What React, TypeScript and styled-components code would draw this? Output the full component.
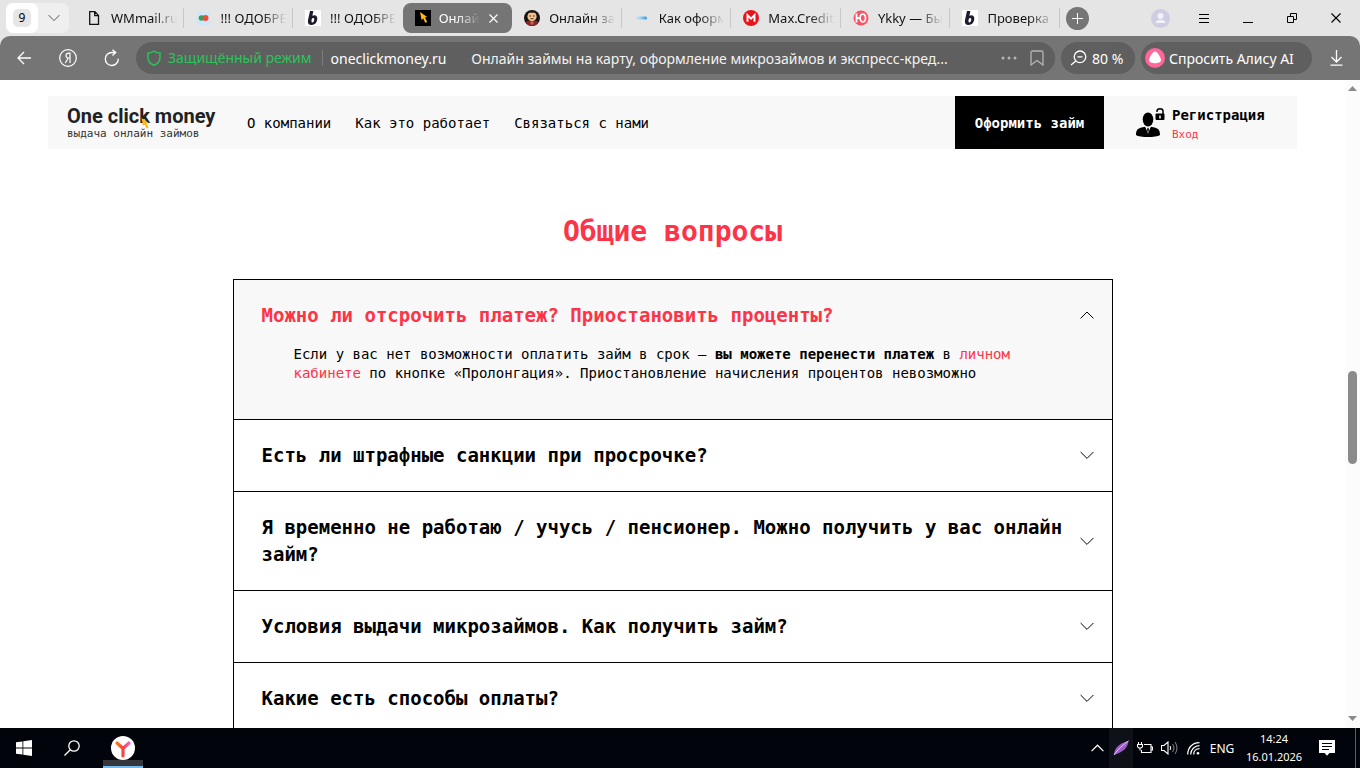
import React, { useState } from "react";
import styled, { createGlobalStyle, css } from "styled-components";

const mono = `"DejaVu Sans Mono", "Liberation Mono", monospace`;
const ui = `"Noto Sans", "Open Sans", sans-serif`;
const red = "#ff3347";

const GlobalStyle = createGlobalStyle`
  * { box-sizing: border-box; }
  body { margin: 0; background: #fff; font-family: ${ui}; }
  button { border: 0; padding: 0; background: none; color: inherit; font: inherit; cursor: pointer; }
  svg { display: block; flex: none; }
  a { color: inherit; text-decoration: none; }
`;

const Screen = styled.div`
  display: flex;
  flex-direction: column;
  height: 100vh;
  overflow: hidden;
`;

/* Browser chrome */

const Chrome = styled.header`
  flex: none;
  background: #e5e5e5;
`;

const TabStrip = styled.div`
  display: flex;
  align-items: center;
  height: 36px;
  padding: 0 2px 0 6px;
`;

const TabCounter = styled.div`
  display: flex;
  flex: none;
  width: 63px;
  height: 30px;
  margin-right: 5px;
  border-radius: 7px;
  background: #efefef;
`;

const CountButton = styled.button`
  display: grid;
  place-items: center;
  width: 32px;
  border-radius: 7px;
  background: #fff;
`;

const Count = styled.span`
  width: 18px;
  border-radius: 5px;
  background: #e6e6e6;
  color: #000;
  font-size: 12px;
  line-height: 18px;
  text-align: center;
`;

const ListButton = styled.button`
  display: grid;
  flex: 1;
  place-items: center;
  color: #888;
`;

const TabList = styled.div`
  display: grid;
  flex: 0 1 986px;
  grid-auto-columns: minmax(0, 1fr);
  grid-auto-flow: column;
  min-width: 0;
`;

const Tab = styled.button<{ $active?: boolean; $divider?: boolean }>`
  display: flex;
  align-items: center;
  gap: 9px;
  min-width: 0;
  height: 30px;
  padding: 0 7px 0 12px;
  color: #111;
  font-size: 13px;
  ${(p) =>
    p.$divider &&
    css`
      background: linear-gradient(#c8c8c8, #c8c8c8) right center / 1px 20px no-repeat;
    `}
  ${(p) =>
    p.$active &&
    css`
      gap: 8px;
      padding-right: 14px;
      border-radius: 8px;
      background: #757575;
      color: #fff;
    `}
`;

const TabTitle = styled.span`
  flex: 1;
  min-width: 0;
  overflow: hidden;
  white-space: nowrap;
  text-align: left;
  mask-image: linear-gradient(to left, transparent, #000 24px);
`;

const NewTab = styled.button`
  display: grid;
  flex: none;
  place-items: center;
  width: 23px;
  height: 23px;
  margin-left: 6px;
  border-radius: 50%;
  background: #757575;
  color: #fff;
`;

const WindowControls = styled.div`
  display: flex;
  margin-left: auto;
`;

const IconButton = styled.button`
  display: grid;
  flex: none;
  place-items: center;
  width: 44px;
  height: 32px;
`;

const Toolbar = styled.div`
  display: flex;
  align-items: center;
  height: 44px;
  padding: 0 2px;
  border-radius: 10px 10px 0 0;
  background: #757575;
  color: #fff;
  font-size: 14px;
`;

const AddressBar = styled.div`
  display: flex;
  flex: 1;
  align-items: center;
  min-width: 0;
  height: 32px;
  margin: 0 6px 0 2px;
  padding: 0 4px 0 10px;
  border-radius: 16px;
  background: #5f5f5f;
`;

const SafeMode = styled.button`
  display: flex;
  align-items: center;
  gap: 6px;
  padding-right: 10px;
  border-right: 1px solid #7b7b7b;
  color: #2bc35a;
  line-height: 16px;
  white-space: nowrap;
`;

const Domain = styled.a`
  margin: 0 25px 0 8px;
`;

const AddressInput = styled.input`
  flex: 1;
  min-width: 0;
  padding: 0;
  border: 0;
  outline: 0;
  background: none;
  color: #f2f2f2;
  font: 14px ${ui};
`;

const AddressAction = styled.button`
  display: grid;
  place-items: center;
  width: 28px;
  height: 28px;
  color: #b5b5b5;
`;

const Pill = styled.button`
  display: flex;
  flex: none;
  align-items: center;
  gap: 5px;
  width: 74px;
  height: 32px;
  margin-right: 6px;
  padding-left: 9px;
  border-radius: 16px;
  background: #5f5f5f;
  white-space: nowrap;
`;

const AlicePill = styled(Pill)`
  gap: 4px;
  width: 171px;
  margin-right: 2px;
  padding-left: 4px;
`;

/* Page */

const Viewport = styled.div`
  display: flex;
  flex: 1;
  min-height: 0;
  background: #fff;
`;

const Page = styled.div`
  flex: 1;
  min-width: 0;
  overflow: hidden;
  padding: 16px 48px 0;
  color: #000;
  font-family: ${mono};
  font-size: 14px;
`;

const SiteHeader = styled.header`
  display: flex;
  align-items: stretch;
  height: 53px;
  background: #f8f8f8;
`;

const Logo = styled.a`
  position: relative;
  width: 180px;
  padding: 9px 0 0 19px;
`;

const LogoName = styled.span`
  display: block;
  color: #222;
  font: 700 20px/22px Roboto, sans-serif;
  white-space: nowrap;
`;

const LogoNote = styled.span`
  display: block;
  color: #333;
  font-size: 11px;
  line-height: 13px;
  white-space: nowrap;
`;

const LogoPointer = styled.svg`
  position: absolute;
  top: 22px;
  left: 93px;
`;

const SiteNav = styled.nav`
  display: flex;
  flex: 1;
  align-items: center;
  gap: 24px;
  padding-left: 19px;
  white-space: nowrap;
`;

const ApplyButton = styled.button`
  width: 149px;
  background: #000;
  color: #fff;
  font-weight: 700;
`;

const Account = styled.div`
  display: flex;
  align-items: center;
  gap: 7px;
  width: 193px;
  padding-left: 32px;
`;

const AccountLinks = styled.div`
  display: flex;
  flex-direction: column;
  gap: 4px;
  padding-top: 4px;
  line-height: 16px;
`;

const RegisterLink = styled.a`
  font-weight: 700;
`;

const LoginLink = styled.a`
  color: ${red};
  font-size: 11px;
`;

const Title = styled.h1`
  margin: 65px 0 29px;
  color: ${red};
  font-size: 28px;
  line-height: 36px;
  text-align: center;
`;

const Accordion = styled.section`
  max-width: 880px;
  margin: 0 auto;
  border: 1px solid #000;
`;

const Item = styled.article<{ $open: boolean }>`
  padding: 22px 0;
  border-bottom: 1px solid #000;
  background: ${(p) => (p.$open ? "#f8f8f8" : "#fff")};
`;

const Question = styled.h2<{ $open: boolean }>`
  margin: 0;
  color: ${(p) => (p.$open ? red : "#000")};
  font-size: 19px;
  line-height: 27px;
`;

const QuestionButton = styled.button`
  display: flex;
  align-items: center;
  justify-content: space-between;
  gap: 16px;
  width: 100%;
  padding: 0 18px 0 28px;
  text-align: left;
`;

const Answer = styled.p`
  margin: 0;
  padding: 16px 80px 14px 60px;
  line-height: 19px;
`;

const AnswerLink = styled.a`
  color: ${red};
`;

const ScrollTrack = styled.div`
  display: flex;
  flex: none;
  flex-direction: column;
  align-items: center;
  width: 15px;
  padding: 6px 0 7px;
  background: #fcfcfc;
`;

const ScrollSpace = styled.div<{ $grow: number }>`
  flex: ${(p) => p.$grow} 1 0;
`;

const ScrollThumb = styled.div`
  width: 9px;
  height: 93px;
  border-radius: 5px;
  background: #8b8b8b;
`;

/* Taskbar */

const Taskbar = styled.footer`
  display: flex;
  flex: none;
  align-items: stretch;
  height: 40px;
  background: #01040a;
  color: #fff;
  font-size: 12px;
`;

const TaskButton = styled.button`
  display: grid;
  place-items: center;
  width: 48px;
`;

const RunningApp = styled.button`
  display: grid;
  place-items: center;
  width: 40px;
  margin-left: 7px;
  border-bottom: 2px solid #76b9ed;
  background: linear-gradient(#35373b, #35373b) bottom / 100% 6px no-repeat;
`;

const Tray = styled.div`
  display: flex;
  align-items: stretch;
  margin-left: auto;
`;

const TrayButton = styled.button<{ $lit?: boolean }>`
  display: grid;
  place-items: center;
  width: 24px;
  background: ${(p) => (p.$lit ? "#0e1218" : "transparent")};
`;

const Language = styled.button`
  width: 34px;
`;

const Clock = styled.time`
  width: 70px;
  padding-top: 2px;
  font-size: 11px;
  line-height: 18px;
  text-align: center;
  white-space: nowrap;
`;

const Notifications = styled.button`
  display: grid;
  place-items: center;
  width: 47px;
  margin-right: 4px;
  padding-right: 10px;
  border-right: 1px solid #5b5d62;
`;

/* Icons */

const line = { fill: "none", stroke: "currentColor", strokeWidth: 1.3 } as const;

const Chevron = ({ up, size = 14 }: { up?: boolean; size?: number }) => (
  <svg width={size} height="8" viewBox="0 0 14 8" {...line}>
    <path d={up ? "M.6 7.4 7 1l6.4 6.4" : "M.6.6 7 7l6.4-6.4"} />
  </svg>
);

const FileIcon = () => (
  <svg width="16" height="16" viewBox="0 0 16 16" {...line}>
    <path d="M3.7 1.7h5.2l3.6 3.7v9H3.7zM8.7 1.7v4h3.8" />
  </svg>
);

const DotsFavicon = () => (
  <svg width="16" height="16" viewBox="0 0 16 16">
    <rect x="1" y="2" width="13" height="13" rx="2" fill="#cfe6fb" />
    <circle cx="5.5" cy="8" r="2.8" fill="#26a65b" />
    <circle cx="9.5" cy="8" r="3" fill="#f04a3a" />
  </svg>
);

const BFavicon = () => (
  <svg width="16" height="16" viewBox="0 0 16 16">
    <rect width="16" height="16" fill="#fff" />
    <path
      d="M5 1h3.300L7.400 5.800c2.700-1.500 5.200.1 4.900 3.300-.4 3.900-2.800 6-5.700 5.900-3-.1-4.200-1.800-3.600-5zM6.700 9.200c-.4 2-.3 3.300.7 3.300 1.100 0 1.700-1.400 1.800-3 .1-2.200-2-1.900-2.500-.3z"
      fill="#1c1c2e"
      fillRule="evenodd"
    />
  </svg>
);

const Pointer = () => (
  <path d="M0 0 9 6.200 6.200 6.800 9 12.600 6.400 13.500 4.300 8.200 2 10z" fill="#fdb913" />
);

const PointerFavicon = () => (
  <svg width="16" height="16" viewBox="0 0 16 16">
    <rect width="16" height="16" fill="#000" />
    <g transform="translate(5 2) scale(.8)">
      <Pointer />
    </g>
  </svg>
);

const MonkFavicon = () => (
  <svg width="16" height="16" viewBox="0 0 16 16">
    <circle cx="8" cy="8" r="8" fill="#171313" />
    <path d="M1.500 12.500c1-3 12-3 13 0-2.500 4.600-10.500 4.600-13 0z" fill="#8e1f2d" />
    <ellipse cx="8" cy="6.500" rx="4.600" ry="4.700" fill="#f3c58c" />
    <path d="M4.500 2.800Q8-1 11.500 2.800z" fill="#241313" />
    <path d="M5.300 6h1.800M9 6h1.800M6.500 8.700h3" stroke="#50291c" />
    <path d="M6.500 11.500h3v3h-3z" fill="#b5713f" />
  </svg>
);

const BlueFavicon = () => (
  <svg width="16" height="16" viewBox="0 0 16 16">
    <defs>
      <linearGradient id="dash">
        <stop stopColor="#bfe4f8" stopOpacity=".3" />
        <stop offset="1" stopColor="#1a94ec" />
      </linearGradient>
    </defs>
    <rect x="1" y="6.500" width="12" height="3" rx="1.500" fill="url(#dash)" />
  </svg>
);

const MFavicon = () => (
  <svg width="16" height="16" viewBox="0 0 16 16">
    <circle cx="8" cy="8" r="8" fill="#e8141c" />
    <path d="M4.500 11.700V5L8 8.600 11.500 5v6.700" fill="none" stroke="#fff" strokeWidth="1.900" />
  </svg>
);

const YuFavicon = () => (
  <svg width="16" height="16" viewBox="0 0 16 16">
    <circle cx="8" cy="8" r="7.500" fill="#fb5263" />
    <path d="M3.500 3.500v9M3.500 8h4" stroke="#fff" strokeWidth="1.800" />
    <ellipse cx="9.800" cy="8" rx="2.700" ry="3.900" fill="none" stroke="#fff" strokeWidth="1.700" />
  </svg>
);

const tabs: { title: string; icon: React.ReactNode; active?: boolean; divider?: boolean }[] = [
  { title: "WMmail.ru", icon: <FileIcon />, divider: true },
  { title: "!!! ОДОБРЕ", icon: <DotsFavicon />, divider: true },
  { title: "!!! ОДОБРЕ", icon: <BFavicon /> },
  { title: "Онлайн", icon: <PointerFavicon />, active: true },
  { title: "Онлайн зай", icon: <MonkFavicon />, divider: true },
  { title: "Как оформ", icon: <BlueFavicon />, divider: true },
  { title: "Max.Credit", icon: <MFavicon />, divider: true },
  { title: "Ykky — Быс", icon: <YuFavicon />, divider: true },
  { title: "Проверка л", icon: <BFavicon />, divider: true },
];

const questions: { title: string; answer?: React.ReactNode }[] = [
  {
    title: "Можно ли отсрочить платеж? Приостановить проценты?",
    answer: (
      <>
        Если у вас нет возможности оплатить займ в срок — <b>вы можете перенести платеж</b> в{" "}
        <AnswerLink href="#account">личном кабинете</AnswerLink> по кнопке «Пролонгация».
        Приостановление начисления процентов невозможно
      </>
    ),
  },
  { title: "Есть ли штрафные санкции при просрочке?" },
  { title: "Я временно не работаю / учусь / пенсионер. Можно получить у вас онлайн займ?" },
  { title: "Условия выдачи микрозаймов. Как получить займ?" },
  { title: "Какие есть способы оплаты?" },
];

const BrowserChrome = () => (
  <Chrome>
    <TabStrip>
      <TabCounter>
        <CountButton aria-label="Открытые вкладки"><Count>9</Count></CountButton>
        <ListButton aria-label="Список вкладок"><Chevron size={12} /></ListButton>
      </TabCounter>
      <TabList role="tablist">
        {tabs.map((t, i) => (
          <Tab key={i} role="tab" aria-selected={!!t.active} $active={t.active} $divider={t.divider}>
            {t.icon}
            <TabTitle>{t.title}</TabTitle>
            {t.active && (
              <svg width="9" height="9" viewBox="0 0 9 9" {...line} strokeWidth={1.1}><path d="m.5.500 8 8m0-8-8 8" /></svg>
            )}
          </Tab>
        ))}
      </TabList>
      <NewTab aria-label="Новая вкладка">
        <svg width="11" height="11" viewBox="0 0 11 11" {...line} strokeWidth={1}><path d="M5.500 0v11M0 5.500h11" /></svg>
      </NewTab>
      <WindowControls>
        <IconButton aria-label="Профиль">
          <svg width="19" height="19" viewBox="0 0 19 19">
            <circle cx="9.500" cy="9.500" r="9.500" fill="#cfcde2" />
            <circle cx="9.500" cy="7" r="3" fill="#f2f1fa" />
            <path d="M4.500 14c0-4.500 10-4.500 10 0z" fill="#f2f1fa" />
          </svg>
        </IconButton>
        <IconButton aria-label="Меню">
          <svg width="10" height="9" viewBox="0 0 10 9" {...line} strokeWidth={1}><path d="M0 .5h10M0 4.500h10M0 8.500h10" /></svg>
        </IconButton>
        <IconButton aria-label="Свернуть">
          <svg width="10" height="10" viewBox="0 0 10 10" {...line} strokeWidth={1}><path d="M0 9.500h10" /></svg>
        </IconButton>
        <IconButton aria-label="Свернуть в окно">
          <svg width="10" height="10" viewBox="0 0 10 10" {...line} strokeWidth={1}><path d="M.5 3.500h6v6h-6zM3.500 3.500v-3h6v6h-3" /></svg>
        </IconButton>
        <IconButton aria-label="Закрыть">
          <svg width="10" height="10" viewBox="0 0 10 10" {...line} strokeWidth={1.1}><path d="m.5.500 9 9m0-9-9 9" /></svg>
        </IconButton>
      </WindowControls>
    </TabStrip>
    <Toolbar>
      <IconButton aria-label="Назад">
        <svg width="14" height="14" viewBox="0 0 14 14" {...line}><path d="M14 7H1M7 1 1 7l6 6" /></svg>
      </IconButton>
      <IconButton aria-label="Яндекс">
        <svg width="18" height="18" viewBox="0 0 18 18" {...line} strokeWidth={1.2}>
          <circle cx="9" cy="9" r="8.300" />
          <path d="M11 14V4.200H9.500C6.500 4.200 6 8.800 9.200 9H11M9.200 9 6.300 14" />
        </svg>
      </IconButton>
      <IconButton aria-label="Обновить">
        <svg width="16" height="18" viewBox="0 0 16 18" {...line}><path d="M14.300 9.800A6.500 6.500 0 1 1 8 3.500h3.500M8.500.7l3.200 2.800-3.200 3" /></svg>
      </IconButton>
      <AddressBar>
        <SafeMode>
          <svg width="16" height="16" viewBox="0 0 16 16" {...line} strokeWidth={1.5}><path d="M8 1c2 1.600 4 2 6 2v4.500C14 11.500 11.500 14 8 15.200 4.500 14 2 11.500 2 7.500V3c2 0 4-.4 6-2z" /></svg>
          Защищённый режим
        </SafeMode>
        <Domain href="#site">oneclickmoney.ru</Domain>
        <AddressInput aria-label="Адрес" defaultValue="Онлайн займы на карту, оформление микрозаймов и экспресс-кред..." />
        <AddressAction aria-label="Ещё">
          <svg width="16" height="4" viewBox="0 0 16 4" fill="currentColor"><circle cx="2" cy="2" r="1.500" /><circle cx="8" cy="2" r="1.500" /><circle cx="14" cy="2" r="1.500" /></svg>
        </AddressAction>
        <AddressAction aria-label="В закладки">
          <svg width="14" height="16" viewBox="0 0 14 16" {...line}><path d="M1 2.500Q1 1 2.500 1h9Q13 1 13 2.500V15l-6-4.500L1 15z" /></svg>
        </AddressAction>
      </AddressBar>
      <Pill>
        <svg width="17" height="16" viewBox="0 0 17 16" {...line}><circle cx="10" cy="6.800" r="5.800" /><path d="M5.800 11 1 15M7.500 6.800h5" /></svg>
        80 %
      </Pill>
      <AlicePill>
        <svg width="20" height="20" viewBox="0 0 20 20"><circle cx="10" cy="10" r="10" fill="#ff6699" /><path d="M10 3.500c2.500 0 6 6.500 6 8.800 0 4-12 4-12 0C4 10 7.500 3.500 10 3.500z" fill="#fff" /></svg>
        Спросить Алису AI
      </AlicePill>
      <IconButton aria-label="Загрузки">
        <svg width="13" height="16" viewBox="0 0 13 16" {...line}><path d="M6.500 0v12M1.500 7l5 5 5-5M.5 15.200h12" /></svg>
      </IconButton>
    </Toolbar>
  </Chrome>
);

const PageHeader = () => (
  <SiteHeader>
    <Logo href="#home">
      <LogoName>One click money</LogoName>
      <LogoNote>выдача онлайн займов</LogoNote>
      <LogoPointer width="8" height="11" viewBox="0 0 9 14"><Pointer /></LogoPointer>
    </Logo>
    <SiteNav>
      <a href="#about">О компании</a>
      <a href="#how">Как это работает</a>
      <a href="#contacts">Связаться с нами</a>
    </SiteNav>
    <ApplyButton>Оформить займ</ApplyButton>
    <Account>
      <svg width="29" height="30" viewBox="0 0 29 30">
        <ellipse cx="12" cy="11.500" rx="5.300" ry="7" />
        <path d="M0 27c0-4.500 1.500-6.200 4.500-7.200l4.500-1 3 5 3-5 4.500 1c3 1 4.500 2.700 4.500 7.200-4 2.800-20 2.800-24 0z" />
        <path d="M9.800 19.500 12 26l2.200-6.500z" fill="#f8f8f8" />
        <path d="m12 19.500-1 1.500 1 5 1-5z" />
        <rect x="19.500" y="5.500" width="9" height="6.500" rx="1" />
        <path d="M21 4V3c0-3 6-3 6 0v3" fill="none" stroke="#000" strokeWidth="1.500" />
        <path d="M24 7.500v3" stroke="#fff" strokeWidth="1.500" />
      </svg>
      <AccountLinks>
        <RegisterLink href="#register">Регистрация</RegisterLink>
        <LoginLink href="#login">Вход</LoginLink>
      </AccountLinks>
    </Account>
  </SiteHeader>
);

const SystemBar = () => (
  <Taskbar>
    <TaskButton aria-label="Пуск">
      <svg width="16" height="16" viewBox="0 0 16 16" fill="#fff"><path d="M0 2.300 6.500 1.400v6.200H0zM7.300 1.300 16 0v7.600H7.300zM0 8.400h6.500v6.200L0 13.700zM7.300 8.400H16V16l-8.700-1.300z" /></svg>
    </TaskButton>
    <TaskButton aria-label="Поиск">
      <svg width="16" height="16" viewBox="0 0 16 16" {...line}><circle cx="10" cy="6" r="5.200" /><path d="M6.300 9.700.5 15.500" /></svg>
    </TaskButton>
    <RunningApp aria-label="Яндекс Браузер">
      <svg width="24" height="26" viewBox="0 -2 24 26">
        <defs>
          <linearGradient id="ya" gradientUnits="userSpaceOnUse" x1="5" y1="0" x2="19" y2="0">
            <stop stopColor="#ff7a1a" />
            <stop offset=".5" stopColor="#f9423a" />
            <stop offset="1" stopColor="#ff5ad0" />
          </linearGradient>
        </defs>
        <circle cx="12" cy="12" r="12" fill="#fff" />
        <path d="M6 7 12 12.500 18 7M12 12.500v7.500" fill="none" stroke="url(#ya)" strokeWidth="3.200" strokeLinecap="round" />
      </svg>
    </RunningApp>
    <Tray>
      <TrayButton aria-label="Скрытые значки"><Chevron up size={13} /></TrayButton>
      <TrayButton aria-label="Перо" $lit>
        <svg width="16" height="16" viewBox="0 0 16 16"><path d="M1 15C1 7 8 3 15.500.8 15 8 10 12 1 15z" fill="#9b5fc4" /><path d="M1 15C5 9 9 6 15.500.8" stroke="#e0c5ef" fill="none" /></svg>
      </TrayButton>
      <TrayButton aria-label="Питание">
        <svg width="16" height="12" viewBox="0 0 16 12" {...line} strokeWidth={1.1}><path d="M7 2.500h7v8H4.500V8M14 5h1.500v3H14M1.500 0v2.500M4.500 0v2.500M.5 2.500h5v2.200L4 6H2L.5 4.700zM3 6v2.500" /></svg>
      </TrayButton>
      <TrayButton aria-label="Звук">
        <svg width="17" height="14" viewBox="0 0 17 14" {...line} strokeWidth={1.1}><path d="M.5 4.500H3L7 1v12L3 9.500H.5z" /><path d="M9 5q1.500 2 0 4" /><path d="M11.500 3q3 4 0 8M14 1q4 6 0 12" stroke="#777" /></svg>
      </TrayButton>
      <TrayButton aria-label="Сеть">
        <svg width="13" height="13" viewBox="0 0 13 13" {...line} strokeWidth={1.2}><path d="M.7 12.500C.7 5.500 5.500.7 12.500.7M3.700 12.500c0-5 4-8.800 8.800-8.800M6.700 12.500c0-3.500 2.500-5.800 5.800-5.800" /><circle cx="11" cy="11.200" r="1.300" fill="#fff" stroke="none" /></svg>
      </TrayButton>
      <Language>ENG</Language>
      <Clock>14:24<br />16.01.2026</Clock>
      <Notifications aria-label="Уведомления">
        <svg width="16" height="16" viewBox="0 0 16 16"><path d="M0 0h16v13h-5.500L8 15.800 5.500 13H0z" fill="#fff" /><path d="M3 3.500h10M3 6.500h10M3 9.500h7" stroke="#01040a" /></svg>
      </Notifications>
    </Tray>
  </Taskbar>
);

export default function App() {
  const [open, setOpen] = useState(0);
  return (
    <Screen>
      <GlobalStyle />
      <BrowserChrome />
      <Viewport>
        <Page>
          <PageHeader />
          <main>
            <Title>Общие вопросы</Title>
            <Accordion>
              {questions.map((q, i) => (
                <Item key={q.title} $open={open === i}>
                  <Question $open={open === i}>
                    <QuestionButton aria-expanded={open === i} onClick={() => setOpen(open === i ? -1 : i)}>
                      {q.title}
                      <svg width="14" height="9" viewBox="0 0 14 9" fill="none" stroke="#000">
                        <path d={open === i ? "M.6 7.400 7 1l6.400 6.400" : "M.6 1 7 7.400l6.400-6.400"} />
                      </svg>
                    </QuestionButton>
                  </Question>
                  {open === i && q.answer && <Answer>{q.answer}</Answer>}
                </Item>
              ))}
            </Accordion>
          </main>
        </Page>
        <ScrollTrack aria-hidden="true">
          <svg width="9" height="5" viewBox="0 0 9 5" fill="#8b8b8b"><path d="M0 5 4.500 0 9 5z" /></svg>
          <ScrollSpace $grow={10} />
          <ScrollThumb />
          <ScrollSpace $grow={9} />
          <svg width="9" height="5" viewBox="0 0 9 5" fill="#8b8b8b"><path d="M0 0 4.500 5 9 0z" /></svg>
        </ScrollTrack>
      </Viewport>
      <SystemBar />
    </Screen>
  );
}
